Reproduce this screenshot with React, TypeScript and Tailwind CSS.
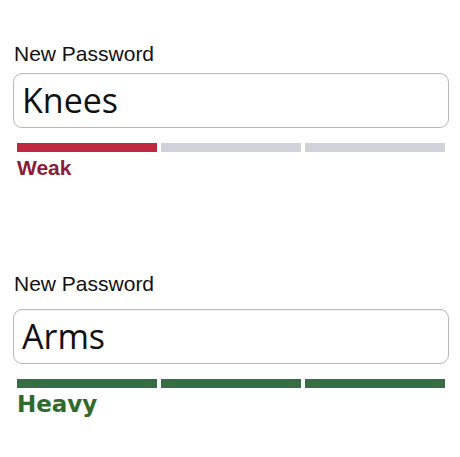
const sans = { fontFamily: '"Liberation Sans", Arial, sans-serif' };

type Strength = {
  value: string;
  label: string;
  filled: number;
  barClass: string;
  textClass: string;
};

function PasswordField({ strength, labelGap }: { strength: Strength; labelGap: string }) {
  return (
    <div className="flex flex-col">
      <label className="pl-px text-[21px] leading-[24px] text-[#111]" style={sans}>
        New Password
      </label>
      <div
        className={`${labelGap} flex h-[55px] items-center rounded-[9px] border border-[#b9b9b9] bg-white pl-2 shadow-[inset_0_1px_1px_rgba(0,0,0,0.04)]`}
      >
        <span className="font-['Open_Sans',sans-serif] text-[34px] text-[#111]">
          {strength.value}
        </span>
      </div>
      <div className="mt-[15px] grid grid-cols-3 gap-1 px-1">
        {[0, 1, 2].map((i) => (
          <div
            key={i}
            className={`h-[9px] ${i < strength.filled ? strength.barClass : 'bg-[#cfd2d8]'}`}
          />
        ))}
      </div>
      <span className={`pl-1 ${strength.textClass}`}>{strength.label}</span>
    </div>
  );
}

export default function App() {
  return (
    <div className="flex min-h-[457px] w-[460px] flex-col bg-white pl-[13px] pr-[11px] pt-[42px]">
      <PasswordField
        strength={{
          value: 'Knees',
          label: 'Weak',
          filled: 1,
          barClass: 'bg-[#c0283f]',
          textClass: "mt-[4px] font-['Liberation_Sans',Arial,sans-serif] text-[21px] font-bold leading-[24px] text-[#8b1c3a]",
        }}
        labelGap="mt-[7px]"
      />
      <div className="mt-[92px]">
        <PasswordField
          strength={{
            value: 'Arms',
            label: 'Heavy',
            filled: 3,
            barClass: 'bg-[#356e44]',
            textClass: "mt-[3px] font-['DejaVu_Sans',sans-serif] text-[23px] font-bold leading-[26px] text-[#2f6a2c]",
          }}
          labelGap="mt-[13px]"
        />
      </div>
    </div>
  );
}
